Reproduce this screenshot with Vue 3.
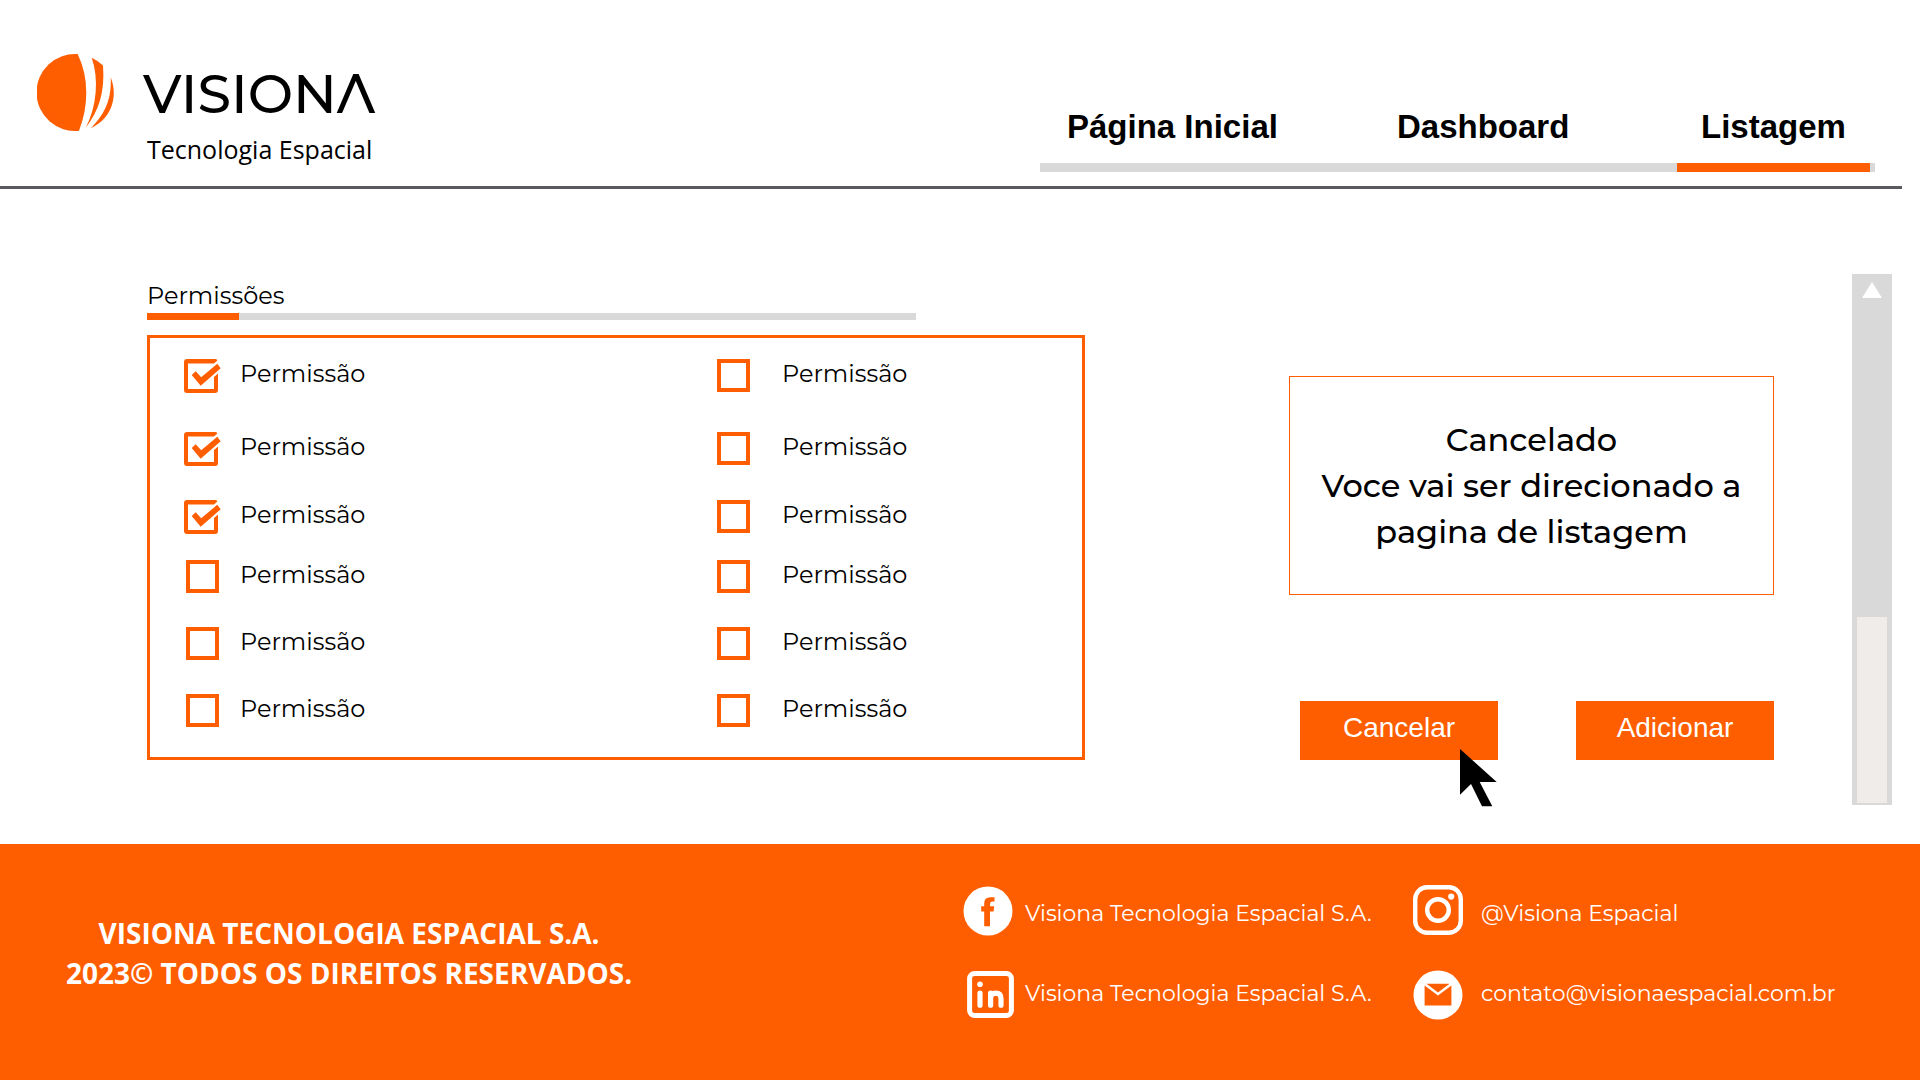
<script setup>
import { ref } from 'vue'

const links = [
  { label: 'Página Inicial', active: false },
  { label: 'Dashboard', active: false },
  { label: 'Listagem', active: true },
]

const columns = ref([
  [true, true, true, false, false, false],
  [false, false, false, false, false, false],
])
</script>

<template>
  <div class="page">
    <header class="header">
      <a class="brand" href="#">
        <svg class="mark" viewBox="0 0 77 77" aria-hidden="true">
          <path d="M40.7 0.1A38.5 38.5 0 1 0 42 76.8Q49.3 58 49.3 38.5Q49.2 18 40.7 0.1Z" />
          <path d="M54.7 3.7Q61 6.5 66 11.6C68 38 62 57 48.7 73.7C60 52 62 25 54.7 3.7Z" />
          <path d="M73.7 23.3C82 44 73 66 54 74C67 61 75 46 73.7 23.3Z" />
        </svg>
        <span class="brand-text">
          <span class="brand-name">VISIONΛ</span>
          <span class="brand-sub">Tecnologia Espacial</span>
        </span>
      </a>
      <nav class="nav">
        <a v-for="link in links" :key="link.label" href="#" :class="{ active: link.active }">{{ link.label }}</a>
      </nav>
    </header>

    <main class="main">
      <section class="permissions">
        <h1>Permissões</h1>
        <div class="progress"></div>
        <div class="panel">
          <ul v-for="(column, c) in columns" :key="c" class="column">
            <li v-for="(checked, r) in column" :key="r">
              <span class="tick">
                <input :id="`perm-${c}-${r}`" v-model="column[r]" type="checkbox" />
                <svg v-if="checked" viewBox="0 0 37 34" aria-hidden="true">
                  <path d="M3 0H31Q33 0 33.3 1.4L30 4.4H4V30H30V18L34 14.4V31Q34 34 31 34H3Q0 34 0 31V3Q0 0 3 0Z" />
                  <path d="M7.7 16L11.7 12.3L17.2 18.3L33.3 4.7L36.7 9.3L16.7 26.7Z" />
                </svg>
              </span>
              <label :for="`perm-${c}-${r}`">Permissão</label>
            </li>
          </ul>
        </div>
      </section>

      <aside class="side">
        <p class="message" role="status">
          Cancelado<br />
          Voce vai ser direcionado a<br />
          pagina de listagem
        </p>
        <div class="actions">
          <button type="button">
            Cancelar
            <svg class="cursor" viewBox="0 0 37 58" aria-hidden="true">
              <path d="M0 0L36.7 33H19.7L32.3 57.3H22L11 35L0 45.7Z" />
            </svg>
          </button>
          <button type="button">Adicionar</button>
        </div>
      </aside>

      <div class="scrollbar" aria-hidden="true">
        <svg class="arrow" viewBox="0 0 20 16"><path d="M10 0L20 16H0Z" /></svg>
        <div class="thumb"></div>
      </div>
    </main>

    <footer class="footer">
      <p class="rights">
        VISIONA TECNOLOGIA ESPACIAL S.A.<br />
        2023© TODOS OS DIREITOS RESERVADOS.
      </p>
      <div class="contacts">
        <a href="#">
          <svg viewBox="0 -1 50 50" aria-hidden="true">
            <circle cx="25" cy="25" r="24.5" fill="#fff" />
            <path d="M31.5 11.2V15.6H29.5Q27 15.6 27 18V20.2H31.2L30.6 25.4H27V40.2H21.2V25.4H18.2V20.2H21.2V17.5Q21.2 11.2 27.5 11.2Z" fill="#ff5e00" />
          </svg>
          <span>Visiona Tecnologia Espacial S.A.</span>
        </a>
        <a href="#">
          <svg viewBox="0 0 50 50" fill="none" stroke="#fff" aria-hidden="true">
            <rect x="2.2" y="2.2" width="45.6" height="45.6" rx="12" stroke-width="4.4" />
            <circle cx="25" cy="25" r="10.8" stroke-width="4.4" />
            <circle cx="38.2" cy="11.6" r="3.1" fill="#fff" stroke="none" />
          </svg>
          <span>@Visiona Espacial</span>
        </a>
        <a href="#">
          <svg viewBox="0 0 50 50" fill="none" stroke="#fff" aria-hidden="true">
            <rect x="6.6" y="4.6" width="41.8" height="41.8" rx="5" stroke-width="5" />
            <circle cx="17" cy="15.2" r="2.8" fill="#fff" stroke="none" />
            <path d="M17 24.2V36.2M27.6 24.2V36.2M27.6 29Q27.6 24.2 32.8 24.2Q38 24.2 38 30V36.2" stroke-width="5.2" stroke-linecap="round" />
          </svg>
          <span>Visiona Tecnologia Espacial S.A.</span>
        </a>
        <a href="#">
          <svg viewBox="0 -1 50 50" aria-hidden="true">
            <circle cx="25" cy="25" r="24.5" fill="#fff" />
            <path d="M13.5 13.8H36.5L25 22.4ZM11.6 15.6L25 25.6L38.4 15.6V35.6H11.6Z" fill="#ff5e00" />
          </svg>
          <span>contato@visionaespacial.com.br</span>
        </a>
      </div>
    </footer>
  </div>
</template>

<style>
body {
  margin: 0;
  background: #fff;
}
</style>

<style scoped>
.page {
  display: flex;
  flex-direction: column;
  min-height: 100vh;
  font-family: Montserrat, Inter, sans-serif;
  color: #000;
}

a {
  color: inherit;
  text-decoration: none;
}

.header {
  display: flex;
  justify-content: space-between;
  align-items: flex-end;
  box-sizing: border-box;
  height: 189px;
  margin-right: 18px;
  padding: 0 27px 14px 37px;
  border-bottom: 3px solid #5a595e;
}

.brand {
  display: flex;
  gap: 29px;
}

.mark {
  width: 77px;
  height: 77px;
  fill: #ff5e00;
}

.brand-text {
  display: flex;
  flex-direction: column;
  padding-top: 10px;
}

.brand-name {
  font-family: Montserrat, "Open Sans", sans-serif;
  font-size: 54px;
  font-weight: 500;
  line-height: 60px;
}

.brand-sub {
  padding: 2px 0 0 4px;
  font-family: "Open Sans", sans-serif;
  font-size: 25px;
  line-height: 46px;
}

.nav {
  display: grid;
  grid-template-columns: 330px 304px 193px;
  padding: 0 5px 0 3px;
  background: linear-gradient(#d9d9d9, #d9d9d9) bottom / 100% 9px no-repeat;
  font: bold 33px/38px "Liberation Sans", Arial, sans-serif;
}

.nav a {
  padding: 0 0 17px 24px;
  border-bottom: 9px solid transparent;
}

.nav a.active {
  border-color: #ff5e00;
}

.main {
  display: flex;
  flex: 1;
  padding: 85px 28px 39px 147px;
}

.permissions {
  flex: 938 1 0;
}

h1 {
  margin: 0;
  padding-top: 6px;
  font-size: 24px;
  font-weight: 400;
  line-height: 32px;
}

.progress {
  width: 82%;
  height: 7px;
  margin-top: 1px;
  background: linear-gradient(#ff5e00, #ff5e00) left / 12% 100% no-repeat #d9d9d9;
}

.panel {
  display: grid;
  grid-template-columns: 531fr 329fr;
  box-sizing: border-box;
  height: 425px;
  margin-top: 15px;
  padding: 21px 36px 0;
  border: 3px solid #ff5e00;
}

.column {
  display: grid;
  grid-template-rows: 73px 68px 60px 67px 67px 34px;
  margin: 0;
  padding: 0;
  list-style: none;
}

.column li {
  display: flex;
  align-items: flex-start;
  gap: 21px;
}

.column + .column li {
  gap: 32px;
}

.tick {
  position: relative;
  width: 33px;
  height: 33px;
}

.tick input {
  display: block;
  box-sizing: border-box;
  width: 33px;
  height: 33px;
  margin: 0;
  border: 4px solid #ff5e00;
  appearance: none;
}

.tick input:checked {
  border-color: transparent;
}

.tick svg {
  position: absolute;
  top: 0;
  left: -2px;
  width: 37px;
  height: 34px;
  fill: #ff5e00;
  pointer-events: none;
}

.column label {
  font-size: 24px;
  font-weight: 400;
  line-height: 30px;
}

.side {
  display: flex;
  flex: 485 1 0;
  flex-direction: column;
  justify-content: space-between;
  margin: 102px 78px 45px 204px;
}

.message {
  margin: 0;
  padding: 40px 0 39px;
  border: 1px solid #ff5e00;
  font-size: 32px;
  font-weight: 500;
  line-height: 46px;
  text-align: center;
}

.actions {
  display: flex;
  justify-content: space-between;
  padding-left: 11px;
}

.actions button {
  position: relative;
  width: 198px;
  height: 59px;
  padding: 0 0 6px;
  border: 0;
  background: #ff5e00;
  color: #fff;
  font: 28px/32px "Liberation Sans", Arial, sans-serif;
}

.cursor {
  position: absolute;
  top: 48px;
  left: 160px;
  width: 37px;
  height: 58px;
  fill: #000;
}

.scrollbar {
  display: flex;
  flex-direction: column;
  align-items: center;
  justify-content: space-between;
  box-sizing: border-box;
  width: 40px;
  padding: 8px 0 2px;
  background: #d9d9d9;
}

.arrow {
  width: 20px;
  height: 16px;
  fill: #fff;
}

.thumb {
  width: 30px;
  height: 186px;
  background: #f0ecea;
}

.footer {
  display: flex;
  justify-content: space-between;
  box-sizing: border-box;
  min-height: 236px;
  padding: 41px 89px 50px 66px;
  background: #ff5e00;
  color: #fff;
}

.rights {
  margin: 0;
  padding-top: 28px;
  font: bold 28px/40px "Open Sans", sans-serif;
  text-align: center;
}

.contacts {
  display: grid;
  grid-template-columns: 450px 418px;
  align-content: start;
  row-gap: 34px;
  font-size: 22px;
  font-weight: 400;
  line-height: 28px;
}

.contacts a {
  display: flex;
  align-items: center;
  gap: 12px;
}

.contacts a:nth-child(even) {
  gap: 18px;
}

.contacts a:nth-child(-n + 2) span {
  padding-top: 8px;
}

.contacts svg {
  flex: none;
  width: 50px;
  height: 50px;
  overflow: visible;
}
</style>
